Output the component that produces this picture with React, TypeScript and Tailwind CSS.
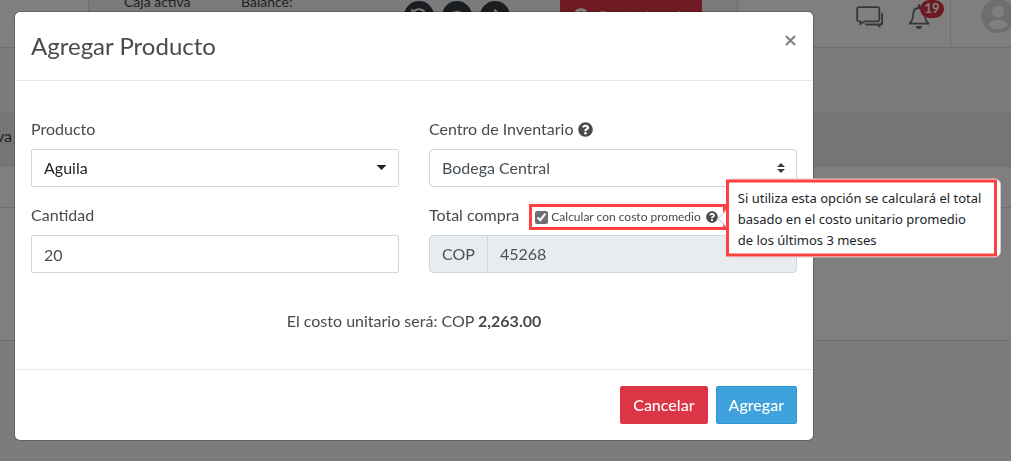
import React, { useState } from 'react';
import { FaArrowRight, FaClock, FaEye, FaHistory, FaQuestionCircle } from 'react-icons/fa';

// ==========================================
// 1. ICONS
// ==========================================
function ChatIcon() {
  return (
    <svg width="28" height="24" viewBox="0 0 28 24" fill="none">
      <path d="M3 1.2h18.5a1.8 1.8 0 0 1 1.8 1.8v10.5a1.8 1.8 0 0 1-1.8 1.8H8.5L4.5 18v-2.7H3a1.8 1.8 0 0 1-1.8-1.8V3A1.8 1.8 0 0 1 3 1.2Z" stroke="#6e6e6e" strokeWidth="1.8" />
      <path d="M25.2 6.5c1.2.2 1.8.9 1.8 2v9c0 1.2-.7 2-2 2h-.6V22l-3.6-2.5H11c-1.3 0-2-.7-2.2-2h15c1 0 1.4-.4 1.4-1.4Z" fill="#6e6e6e" />
    </svg>
  );
}

function BellIcon() {
  return (
    <svg width="22" height="28" viewBox="0 0 22 28" fill="none">
      <path d="M11 4c-4 0-5.8 3-5.8 6.500 0 5-1.400 7-3.700 9.200h19c-2.300-2.200-3.700-4.200-3.700-9.200 0-3.500-1.800-6.500-5.800-6.500Z" stroke="#6e6e6e" strokeWidth="1.8" strokeLinejoin="round" />
      <path d="M11 1.500v2" stroke="#6e6e6e" strokeWidth="2.5" strokeLinecap="round" />
      <path d="M8 22h6a3 3 0 0 1-6 0Z" fill="#6e6e6e" />
    </svg>
  );
}

function AvatarIcon() {
  return (
    <svg width="34" height="34" viewBox="0 0 34 34">
      <circle cx="17" cy="16" r="17" fill="#dcdcdc" />
      <circle cx="17" cy="11.5" r="6" fill="#fff" />
      <path d="M7 25c2-3.7 5.5-5 10-5s8 1.3 10 5c-2.4 2.8-6 4.2-10 4.2S9.4 27.8 7 25Z" fill="#fff" />
    </svg>
  );
}

// ==========================================
// 2. PAGE BEHIND THE MODAL
// ==========================================
const roundIcons = [FaHistory, FaEye, FaArrowRight];

function Page() {
  return (
    <div className="min-h-screen bg-[#f9f9f9]">
      <header className="flex h-12 border-b border-[#dcdcdc] bg-white text-[#444]">
        <div className="ml-[88px] flex w-[650px] items-center border-x border-[#dcdcdc] bg-[#f5f5f5] pb-4 pl-[35px] text-sm leading-7">
          <div className="w-[117px]">
            Caja activa
            <br />
            &nbsp;
          </div>
          <div className="w-[163px]">
            Balance:
            <br />
            &nbsp;
          </div>
          <div className="flex gap-2">
            {roundIcons.map((Icon, i) => (
              <button key={i} type="button" className="flex size-[30px] items-center justify-center rounded-full bg-[#343a40] text-base text-white">
                <Icon />
              </button>
            ))}
          </div>
          <button type="button" className="ml-[50px] flex h-[38px] w-[142px] shrink-0 items-center justify-center gap-2 bg-[#dc3545] text-base text-white">
            <FaClock className="size-4" />
            Corte de caja
          </button>
        </div>
        <div className="ml-auto flex">
          <div className="flex items-center gap-6 pr-[20px] pb-3">
            <ChatIcon />
            <div className="relative">
              <BellIcon />
              <span className="absolute -top-1 left-3 h-[18px] w-6 rounded-full bg-[#dc3545] text-center text-[13px] leading-[16px] font-bold text-white">19</span>
            </div>
          </div>
          <div className="w-[61px] overflow-hidden border-l border-[#dcdcdc] pl-[30px]">
            <div className="w-[34px]">
              <AvatarIcon />
            </div>
          </div>
        </div>
      </header>
      <div className="h-16" />
      <div className="flex h-[55px] items-center bg-[#e9ecef] pb-2 text-base text-[#444]">
        <span className="-ml-1">va d</span>
      </div>
      <div className="border-b border-[#dcdcdc] bg-white">
        <div className="h-[41px] border-b border-[#dcdcdc]" />
        <div className="h-[132px]" />
      </div>
    </div>
  );
}

// ==========================================
// 3. FORM PARTS
// ==========================================
interface FieldProps {
  id: string;
  label: string;
  extra?: React.ReactNode;
  children: React.ReactNode;
}

function Field({ id, label, extra, children }: FieldProps) {
  return (
    <div>
      <div className="mb-2 flex h-6 items-center">
        <label htmlFor={id}>{label}</label>
        {extra}
      </div>
      {children}
    </div>
  );
}

function CostTooltip() {
  return (
    <div
      role="tooltip"
      className="absolute top-1/2 left-full z-10 mt-px ml-[3px] w-[275px] -translate-y-1/2 rounded-md border border-[#ccc] bg-white pr-[3px]"
    >
      <span className="absolute top-1/2 -left-[7px] size-3 -translate-y-1/2 rotate-45 border-b border-l border-[#ccc] bg-white" />
      <div className="relative -ml-px border-3 border-[#ff4040] bg-white pt-[5px] pb-[3px] pl-[9px] font-['Noto_Sans',sans-serif] text-[13px] leading-[21px] whitespace-nowrap text-[#212529]">
        Si utiliza esta opción se calculará el total
        <br />
        basado en el costo unitario promedio
        <br />
        de los últimos 3 meses
      </div>
    </div>
  );
}

// ==========================================
// 4. MODAL
// ==========================================
function AddProductModal() {
  const [average, setAverage] = useState(true);

  return (
    <div
      role="dialog"
      aria-labelledby="modal-title"
      className="mt-[11px] ml-[14px] w-full max-w-[800px] rounded-md border border-black/20 bg-white bg-clip-padding text-base"
    >
      <div className="flex items-start justify-between border-b border-[#e4e7ec] p-4">
        <h5 id="modal-title" className="text-2xl leading-9">
          Agregar Producto
        </h5>
        <button type="button" aria-label="Cerrar" className="flex h-6 w-[14px] items-center justify-center text-[#7f7f7f]">
          <svg width="11" height="11" viewBox="0 0 12 12" stroke="currentColor" strokeWidth="2.2">
            <path d="M1 1l10 10M11 1L1 11" />
          </svg>
        </button>
      </div>

      <div className="px-4 py-9">
        <div className="grid grid-cols-2 gap-x-[30px] gap-y-4">
          <Field id="product" label="Producto">
            <div className="relative">
              <select id="product" className="h-[38px] w-full appearance-none rounded-[2px] border border-[#ced4da] bg-white px-3 text-[#212529]">
                <option>Aguila</option>
              </select>
              <svg className="pointer-events-none absolute top-4 right-3" width="11" height="5" viewBox="0 0 11 5">
                <path d="M0.5 0h10L5.5 5Z" fill="#212529" />
              </svg>
            </div>
          </Field>

          <Field id="center" label="Centro de Inventario" extra={<FaQuestionCircle className="ml-1 size-[15px]" />}>
            <div className="relative">
              <select id="center" className="h-[38px] w-full appearance-none rounded border border-[#ced4da] bg-white px-3 text-[#495057]">
                <option>Bodega Central</option>
              </select>
              <svg className="pointer-events-none absolute top-[14px] right-3" width="8" height="10" viewBox="0 0 8 10">
                <path d="M4 0L0 4h8ZM4 10L0 6h8Z" fill="#343a40" />
              </svg>
            </div>
          </Field>

          <Field id="quantity" label="Cantidad">
            <input id="quantity" type="text" defaultValue="20" className="h-[38px] w-full rounded-[2px] border border-[#ced4da] px-3 text-[#495057]" />
          </Field>

          <Field
            id="total"
            label="Total compra"
            extra={
              <div className="relative mt-1 ml-[10px] flex h-[26px] shrink-0 items-center border-3 border-[#ff4040] px-[3px] text-xs">
                <input
                  id="average"
                  type="checkbox"
                  checked={average}
                  onChange={(e) => setAverage(e.target.checked)}
                  className="mr-[3px] size-[13px] accent-[#6f6f6f]"
                />
                <label htmlFor="average" className="whitespace-nowrap">
                  Calcular con costo promedio
                </label>
                <FaQuestionCircle className="mr-[2px] ml-[5px] size-3" />
                <CostTooltip />
              </div>
            }
          >
            <div className="flex h-[38px] overflow-hidden rounded border border-[#ced4da] bg-[#e9ecef] text-[#495057]">
              <span className="flex items-center border-r border-[#ced4da] px-3">COP</span>
              <input id="total" type="text" readOnly value="45268" className="w-full min-w-0 px-3" />
            </div>
          </Field>
        </div>

        <p className="mt-9 text-center">
          El costo unitario será: COP <strong className="font-bold">2,263.00</strong>
        </p>
      </div>

      <div className="flex justify-end gap-2 border-t border-[#e9e9e9] p-4 font-medium text-white">
        <button type="button" className="h-[38px] rounded-[2px] border border-[#dc3545] bg-[#dc3545] px-3">
          Cancelar
        </button>
        <button type="button" className="h-[38px] rounded-[2px] border border-[#2b95d6] bg-[#3fa2dd] px-3">
          Agregar
        </button>
      </div>
    </div>
  );
}

export default function App() {
  return (
    <div className="relative h-screen overflow-hidden font-['Lato',sans-serif] text-[#4a4a4a]">
      <Page />
      <div className="fixed inset-0 flex items-start bg-black/50">
        <AddProductModal />
      </div>
    </div>
  );
}
